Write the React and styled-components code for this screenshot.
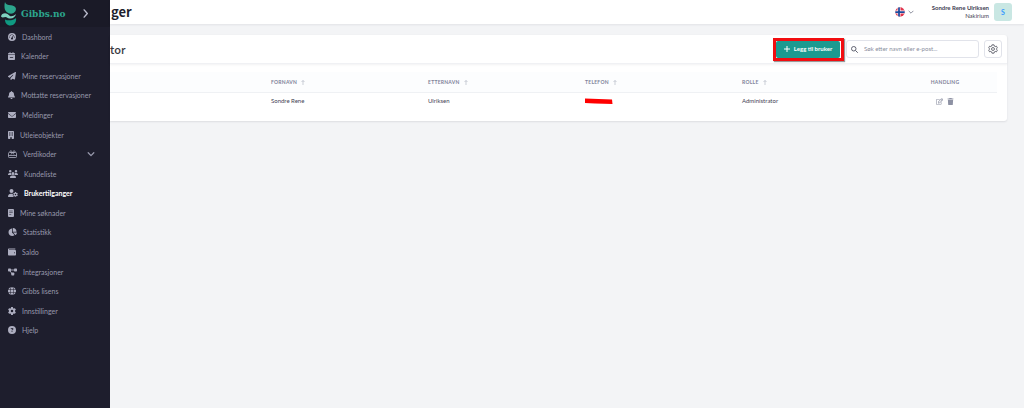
import React from "react";
import styled, { createGlobalStyle } from "styled-components";
import {
  FaGaugeHigh, FaCalendarMinus, FaPaperPlane, FaBell, FaEnvelope, FaBuilding, FaUsers,
  FaUserGear, FaChartPie, FaWallet, FaGlobe, FaGear, FaCircleQuestion, FaTrash,
} from "react-icons/fa6";
import { FaRegEdit } from "react-icons/fa";

const GlobalStyle = createGlobalStyle`
  *, *::before, *::after { box-sizing: border-box; }
  body {
    margin: 0;
    background: #f3f4f6;
    color: #3f4254;
    font-family: Lato, "Noto Sans CJK JP", sans-serif;
    font-size: 7px;
    line-height: 10px;
  }
  button, input { font: inherit; color: inherit; }
  h1, h2, p, ul { margin: 0; padding: 0; }
`;

const Layout = styled.div`
  display: grid;
  grid-template-columns: 110px minmax(0, 1fr);
  min-height: 100vh;
`;

const Sidebar = styled.aside`
  background: #1e1e2d;
  color: #9899ac;
`;

const Brand = styled.div`
  display: flex;
  align-items: center;
  height: 27px;
  padding: 0 20px 0 1px;
  background: #1a1a27;
`;

const BrandLink = styled.a`
  display: flex;
  align-items: center;
  gap: 4px;
  flex: 1;
  color: #2ca58d;
  font: bold 9px/14px "DejaVu Serif", serif;
  text-decoration: none;
`;

const BrandMark = styled.svg`
  width: 16px;
  height: 24px;
`;

const PlainButton = styled.button`
  display: flex;
  align-items: center;
  justify-content: center;
  padding: 0;
  border: 0;
  background: none;
  color: ${(p) => p.$color || "inherit"};
`;

const NavList = styled.ul`
  display: grid;
  grid-auto-rows: 1fr;
  height: 313px;
  list-style: none;
`;

const NavItem = styled.li`
  display: flex;
  align-items: center;
  padding: 0 15px 0 8px;
`;

const NavLink = styled.a`
  display: flex;
  align-items: center;
  flex: 1;
  gap: 6px;
  color: ${(p) => (p.$active ? "#ffffff" : "#9899ac")};
  font-weight: ${(p) => (p.$active ? 700 : 400)};
  text-decoration: none;
  white-space: nowrap;
  svg {
    width: ${(p) => p.$iconWidth}px;
    height: 8px;
    color: #adaec0;
  }
`;

const TopBar = styled.header`
  display: flex;
  align-items: center;
  height: 24px;
  padding: 0 12px 0 1px;
  background: #ffffff;
  box-shadow: 0 1px 2px rgba(30, 30, 45, 0.08);
`;

const Spacer = styled.div`
  flex: 1;
`;

const PageTitle = styled.h1`
  color: #1e1e2d;
  font: 700 13px/20px "Noto Sans CJK JP", sans-serif;
`;

const LanguageButton = styled(PlainButton)`
  gap: 3px;
  margin-right: 18px;
`;

const User = styled.div`
  margin-right: 5px;
  text-align: right;
  font-size: 6px;
  line-height: 8px;
  strong {
    display: block;
    font-weight: 700;
  }
`;

const Avatar = styled.div`
  width: 18px;
  height: 18px;
  border-radius: 3px;
  background: #c9e7e3;
  color: #3699ff;
  font-weight: 700;
  line-height: 18px;
  text-align: center;
`;

const Main = styled.main`
  padding: 11px 17px 11px 0;
`;

const Card = styled.section`
  border-radius: 0 3px 3px 0;
  background: #ffffff;
  box-shadow: 0 1px 2px rgba(30, 30, 45, 0.1);
`;

const CardHeader = styled.div`
  display: flex;
  align-items: center;
  height: 29px;
  padding-right: 5px;
  border-bottom: 1px solid #f0f1f4;
  box-shadow: 0 1px 2px rgba(30, 30, 45, 0.06);
`;

const CardTitle = styled.h2`
  color: #3a3a3f;
  font: 500 11px/20px "Noto Sans CJK JP", sans-serif;
`;

const Highlight = styled.div`
  margin-right: 2px;
  padding-right: 1px;
  border: 3px solid #f20d10;
  box-shadow: 1px 1px 1px rgba(0, 0, 0, 0.4);
`;

const AddButton = styled(PlainButton)`
  gap: 4px;
  width: 64px;
  height: 17px;
  border-radius: 2px;
  background: #1b9a90;
  color: #ffffff;
  font-size: 6px;
  font-weight: 700;
`;

const SearchBox = styled.label`
  display: flex;
  align-items: center;
  gap: 6px;
  width: 133px;
  height: 18px;
  margin-right: 5px;
  padding: 0 4px;
  border: 1px solid #e1e3ea;
  border-radius: 3px;
`;

const SearchInput = styled.input`
  flex: 1;
  min-width: 0;
  padding: 0;
  border: 0;
  outline: 0;
  background: none;
  font-size: 6px;
  &::placeholder { color: #8a8e9e; opacity: 1; }
`;

const SettingsButton = styled(PlainButton)`
  width: 18px;
  height: 18px;
  border: 1px solid #e1e3ea;
  border-radius: 3px;
  color: #50535f;
`;

const TableWrap = styled.div`
  padding: 8px 10px 11px 0;
`;

const Table = styled.table`
  width: 100%;
  border-collapse: collapse;
  table-layout: fixed;
`;

const HeadCell = styled.th`
  height: 20px;
  padding: 0 6px;
  border-bottom: 1px solid #eff1f4;
  background: #fcfdfe;
  color: #7e8299;
  font-size: 5px;
  font-weight: 700;
  letter-spacing: 0.05em;
  text-align: ${(p) => (p.$center ? "center" : "left")};
  text-transform: uppercase;
`;

const Cell = styled.td`
  height: 18px;
  padding: 0 6px;
  font-size: 6px;
`;

const SortArrow = styled.svg`
  width: 4px;
  height: 5px;
  margin-left: 4px;
  vertical-align: -1px;
  color: #b5b9c6;
`;

const Redaction = styled.svg`
  width: 28px;
  height: 7px;
  vertical-align: middle;
`;

const Actions = styled.div`
  display: flex;
  justify-content: center;
  gap: 4px;
`;

const GiftCardIcon = () => (
  <svg viewBox="0 0 18 16" fill="none" stroke="currentColor" strokeWidth="1.6" aria-hidden="true">
    <rect x="1" y="5" width="16" height="10" rx="1.5" />
    <path d="M1 11h16M9 5L6 9M9 5l3 4M9 5C7.500 1 3.500.5 4 3.500 4.200 4.700 6 5 9 5zM9 5c1.500-4 5.500-4.500 5-1.500C13.800 4.700 12 5 9 5z" />
  </svg>
);

const MemoIcon = () => (
  <svg viewBox="0 0 12 16" fill="currentColor" aria-hidden="true">
    <path fillRule="evenodd" d="M2 0h8a2 2 0 0 1 2 2v12a2 2 0 0 1-2 2H2a2 2 0 0 1-2-2V2C0 .9.9 0 2 0zm.5 3.500v1.200h7V3.500zm0 3.500v1.200h7V7zm0 3.500v1.200h4v-1.200z" />
  </svg>
);

const NetworkIcon = () => (
  <svg viewBox="0 0 18 16" fill="currentColor" aria-hidden="true">
    <rect x="0" y="1" width="6" height="6" rx="1.500" />
    <rect x="12" y="1" width="6" height="6" rx="1.500" />
    <rect x="6.500" y="9" width="6" height="6" rx="1.500" />
    <path d="M4 4h10M3.500 5l5 7" stroke="currentColor" strokeWidth="1.800" />
  </svg>
);

const Chevron = ({ size, d }) => (
  <svg width={size} height={size} viewBox="0 0 10 10" fill="none" stroke="currentColor" strokeWidth="1.6" strokeLinecap="round" strokeLinejoin="round" aria-hidden="true">
    <path d={d} />
  </svg>
);
const DOWN = "M1.500 3.500L5 7l3.500-3.500";
const RIGHT = "M3.500 1L7 5 3.500 9";

const Flag = () => (
  <svg width="10" height="10" viewBox="0 0 20 20" aria-hidden="true">
    <clipPath id="round"><circle cx="10" cy="10" r="9.500" /></clipPath>
    <g clipPath="url(#round)">
      <path fill="#e0334c" d="M0 0h20v20H0z" />
      <path stroke="#ffffff" strokeWidth="6" d="M8 0v20M0 10h20" />
      <path stroke="#1c4a9c" strokeWidth="3.500" d="M8 0v20M0 10h20" />
    </g>
  </svg>
);

const NAV = [
  { label: "Dashbord", Icon: FaGaugeHigh, width: 8 },
  { label: "Kalender", Icon: FaCalendarMinus, width: 7 },
  { label: "Mine reservasjoner", Icon: FaPaperPlane, width: 8 },
  { label: "Mottatte reservasjoner", Icon: FaBell, width: 7 },
  { label: "Meldinger", Icon: FaEnvelope, width: 8 },
  { label: "Utleieobjekter", Icon: FaBuilding, width: 6 },
  { label: "Verdikoder", Icon: GiftCardIcon, width: 9, expandable: true },
  { label: "Kundeliste", Icon: FaUsers, width: 10 },
  { label: "Brukertilganger", Icon: FaUserGear, width: 10, active: true },
  { label: "Mine søknader", Icon: MemoIcon, width: 6 },
  { label: "Statistikk", Icon: FaChartPie, width: 9 },
  { label: "Saldo", Icon: FaWallet, width: 8 },
  { label: "Integrasjoner", Icon: NetworkIcon, width: 9 },
  { label: "Gibbs lisens", Icon: FaGlobe, width: 8 },
  { label: "Innstillinger", Icon: FaGear, width: 8 },
  { label: "Hjelp", Icon: FaCircleQuestion, width: 8 },
];

const COLUMNS = ["Fornavn", "Etternavn", "Telefon", "Rolle"];

export default function App() {
  return (
    <Layout>
      <GlobalStyle />
      <Sidebar>
        <Brand>
          <BrandLink href="#">
            <BrandMark viewBox="0 0 16 24" aria-hidden="true">
              <path fill="#2ca58d" d="M4 0C4.500 2.500 7 3 10 3.300 14 3.800 16 6 14.500 9 13.500 11 11 12 8.500 11.500 5.500 10.800 3.500 8 3.500 5 3.500 3 3.500 1.500 4 0z" />
              <path fill="#7fd0bf" d="M0 14.500C.5 11.500 4 10.500 6.500 12c1.500.9 2 2 3 2.200 1.800.3 3.500-.5 5.500-2.200-.5 3-3.500 5-6.500 4.500-2-.3-2.500-1.500-4-1.500S1.500 16.500 0 14.500z" />
              <path fill="#0f9a82" d="M4 17.500c3 1.500 8.500 1 11-1.500.8 4-2 7.500-5.500 7.500S4 21 4 17.500z" />
            </BrandMark>
            Gibbs.no
          </BrandLink>
          <PlainButton type="button" aria-label="Meny" $color="#b9bacb">
            <Chevron size={9} d={RIGHT} />
          </PlainButton>
        </Brand>
        <nav>
          <NavList>
            {NAV.map(({ label, Icon, width, active, expandable }) => (
              <NavItem key={label}>
                <NavLink href="#" $active={active} $iconWidth={width} aria-current={active ? "page" : undefined}>
                  <Icon />
                  {label}
                </NavLink>
                {expandable && <Chevron size={8} d={DOWN} />}
              </NavItem>
            ))}
          </NavList>
        </nav>
      </Sidebar>

      <div>
        <TopBar>
          <PageTitle>ger</PageTitle>
          <Spacer />
          <LanguageButton type="button" aria-label="Språk" $color="#8a8d9b">
            <Flag />
            <Chevron size={6} d={DOWN} />
          </LanguageButton>
          <User>
            <strong>Sondre Rene Ulriksen</strong>
            Nakirium
          </User>
          <Avatar>S</Avatar>
        </TopBar>

        <Main>
          <Card>
            <CardHeader>
              <CardTitle>tor</CardTitle>
              <Spacer />
              <Highlight>
                <AddButton type="button">
                  <svg width="6" height="6" viewBox="0 0 6 6" stroke="currentColor" aria-hidden="true">
                    <path d="M3 0v6M0 3h6" />
                  </svg>
                  Legg til bruker
                </AddButton>
              </Highlight>
              <SearchBox>
                <svg width="7" height="7" viewBox="0 0 14 14" fill="none" stroke="#5f6270" strokeWidth="2" aria-hidden="true">
                  <circle cx="5.500" cy="5.500" r="4.500" />
                  <path d="M9 9l4.500 4.500" />
                </svg>
                <SearchInput type="text" aria-label="Søk" placeholder="Søk etter navn eller e-post..." />
              </SearchBox>
              <SettingsButton type="button" aria-label="Innstillinger">
                <svg width="10" height="10" viewBox="0 0 24 24" fill="none" stroke="currentColor" strokeWidth="2" strokeLinejoin="round" aria-hidden="true">
                  <path d="M9.500 2h5l.7 3 2 1.200 3-1 2.300 4L20.300 11.500v1l2.200 2.300-2.300 4-3-1-2 1.200-.7 3h-5l-.7-3-2-1.200-3 1-2.300-4 2.200-2.300v-1L1.500 9.200l2.300-4 3 1 2-1.200z" />
                  <circle cx="12" cy="12" r="3.500" />
                </svg>
              </SettingsButton>
            </CardHeader>
            <TableWrap>
              <Table>
                <colgroup>
                  <col />
                  {COLUMNS.map((c) => <col key={c} width="157" />)}
                  <col width="104" />
                </colgroup>
                <thead>
                  <tr>
                    <HeadCell as="td" />
                    {COLUMNS.map((c) => (
                      <HeadCell key={c} scope="col">
                        {c}
                        <SortArrow viewBox="0 0 4 5" fill="none" stroke="currentColor" strokeWidth="0.7" aria-hidden="true">
                          <path d="M2 5V.5M.5 2L2 .5 3.500 2" />
                        </SortArrow>
                      </HeadCell>
                    ))}
                    <HeadCell scope="col" $center>Handling</HeadCell>
                  </tr>
                </thead>
                <tbody>
                  <tr>
                    <Cell />
                    <Cell>Sondre Rene</Cell>
                    <Cell>Ulriksen</Cell>
                    <Cell>
                      <Redaction viewBox="0 0 28 7" role="img" aria-label="Skjult">
                        <path d="M0 .5L27 1.500l.5 4.500L10 5.500 0 5z" fill="#ff0000" />
                      </Redaction>
                    </Cell>
                    <Cell>Administrator</Cell>
                    <Cell>
                      <Actions>
                        <PlainButton type="button" aria-label="Rediger" $color="#8d91a3"><FaRegEdit size={7} /></PlainButton>
                        <PlainButton type="button" aria-label="Slett" $color="#8d91a3"><FaTrash size={7} /></PlainButton>
                      </Actions>
                    </Cell>
                  </tr>
                </tbody>
              </Table>
            </TableWrap>
          </Card>
        </Main>
      </div>
    </Layout>
  );
}
